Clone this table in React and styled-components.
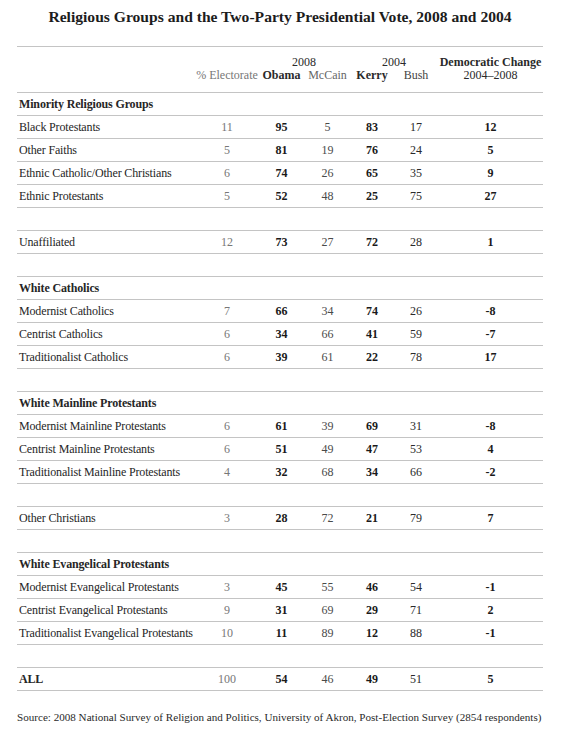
import React from 'react'
import styled, { createGlobalStyle } from 'styled-components'

const Global = createGlobalStyle`
  body {
    margin: 0;
    background: #fff;
    font-family: "Liberation Serif", "Times New Roman", serif;
    color: #222;
  }
`

const Page = styled.div`
  width: 567px;
  padding: 7px 24px 0 17px;
  box-sizing: border-box;
`

const Title = styled.h1`
  margin: 0 0 19px;
  font-size: 15.6px;
  line-height: 20px;
  font-weight: 700;
  text-align: center;
  color: #1c1c1c;
`

const COLS = '179px 62px 47px 45px 44px 44px 1fr'

const Table = styled.div`
  border-top: 1px solid #c4c4c4;
`

const HeadRow = styled.div`
  display: grid;
  grid-template-columns: ${COLS};
  height: ${p => p.$h}px;
  align-items: ${p => (p.$top ? 'start' : 'end')};
  border-bottom: ${p => (p.$last ? '1px solid #c4c4c4' : 'none')};
  box-sizing: border-box;
  font-size: 12px;
  line-height: 13px;
`

const Head = styled.div`
  grid-column: ${p => p.$span || 'auto'};
  text-align: center;
  color: ${p => p.$color || '#2a2a2a'};
  font-weight: ${p => (p.$bold ? 700 : 400)};
  white-space: nowrap;
`

const Row = styled.div`
  display: grid;
  grid-template-columns: ${COLS};
  height: 23px;
  align-items: center;
  border-bottom: 1px solid #c4c4c4;
  box-sizing: border-box;
  font-size: 12px;
`

const Label = styled.div`
  padding-left: 2px;
  white-space: nowrap;
  letter-spacing: -0.15px;
  font-weight: ${p => (p.$bold ? 700 : 400)};
  color: #262626;
`

const TONES = {
  elect: { color: '#777', weight: 400 },
  bold: { color: '#1a1a1a', weight: 700 },
  plain: { color: '#4a4a4a', weight: 400 },
  dark: { color: '#2a2a2a', weight: 400 },
}

const Num = styled.div`
  text-align: center;
  color: ${p => TONES[p.$tone].color};
  font-weight: ${p => TONES[p.$tone].weight};
`

const Source = styled.p`
  margin: 18px 0 0;
  font-size: 11.1px;
  line-height: 16px;
  color: #2a2a2a;
  white-space: nowrap;
`

const tones = ['elect', 'bold', 'plain', 'bold', 'dark', 'bold']

const rows = [
  { group: 'Minority Religious Groups' },
  { name: 'Black Protestants', v: [11, 95, 5, 83, 17, 12] },
  { name: 'Other Faiths', v: [5, 81, 19, 76, 24, 5] },
  { name: 'Ethnic Catholic/Other Christians', v: [6, 74, 26, 65, 35, 9] },
  { name: 'Ethnic Protestants', v: [5, 52, 48, 25, 75, 27] },
  { spacer: true },
  { name: 'Unaffiliated', v: [12, 73, 27, 72, 28, 1] },
  { spacer: true },
  { group: 'White Catholics' },
  { name: 'Modernist Catholics', v: [7, 66, 34, 74, 26, -8] },
  { name: 'Centrist Catholics', v: [6, 34, 66, 41, 59, -7] },
  { name: 'Traditionalist Catholics', v: [6, 39, 61, 22, 78, 17] },
  { spacer: true },
  { group: 'White Mainline Protestants' },
  { name: 'Modernist Mainline Protestants', v: [6, 61, 39, 69, 31, -8] },
  { name: 'Centrist Mainline Protestants', v: [6, 51, 49, 47, 53, 4] },
  { name: 'Traditionalist Mainline Protestants', v: [4, 32, 68, 34, 66, -2] },
  { spacer: true },
  { name: 'Other Christians', v: [3, 28, 72, 21, 79, 7] },
  { spacer: true },
  { group: 'White Evangelical Protestants' },
  { name: 'Modernist Evangelical Protestants', v: [3, 45, 55, 46, 54, -1] },
  { name: 'Centrist Evangelical Protestants', v: [9, 31, 69, 29, 71, 2] },
  { name: 'Traditionalist Evangelical Protestants', v: [10, 11, 89, 12, 88, -1] },
  { spacer: true },
  { name: 'ALL', bold: true, v: [100, 54, 46, 49, 51, 5] },
]

export default function App() {
  return (
    <Page>
      <Global />
      <Title>Religious Groups and the Two-Party Presidential Vote, 2008 and 2004</Title>
      <Table>
        <HeadRow $h={22}>
          <Head $span="3 / span 2">2008</Head>
          <Head $span="5 / span 2">2004</Head>
          <Head $span="7" $bold>Democratic Change</Head>
        </HeadRow>
        <HeadRow $h={24} $top $last>
          <div />
          <Head $color="#777">% Electorate</Head>
          <Head $bold>Obama</Head>
          <Head $color="#666">McCain</Head>
          <Head $bold>Kerry</Head>
          <Head $color="#444">Bush</Head>
          <Head>2004–2008</Head>
        </HeadRow>
        {rows.map((r, i) => (
          <Row key={i}>
            <Label $bold={r.group || r.bold}>{r.group || r.name}</Label>
            {r.v && r.v.map((n, j) => (
              <Num key={j} $tone={tones[j]}>{n}</Num>
            ))}
          </Row>
        ))}
      </Table>
      <Source>
        Source: 2008 National Survey of Religion and Politics, University of Akron, Post-Election Survey (2854 respondents)
      </Source>
    </Page>
  )
}
